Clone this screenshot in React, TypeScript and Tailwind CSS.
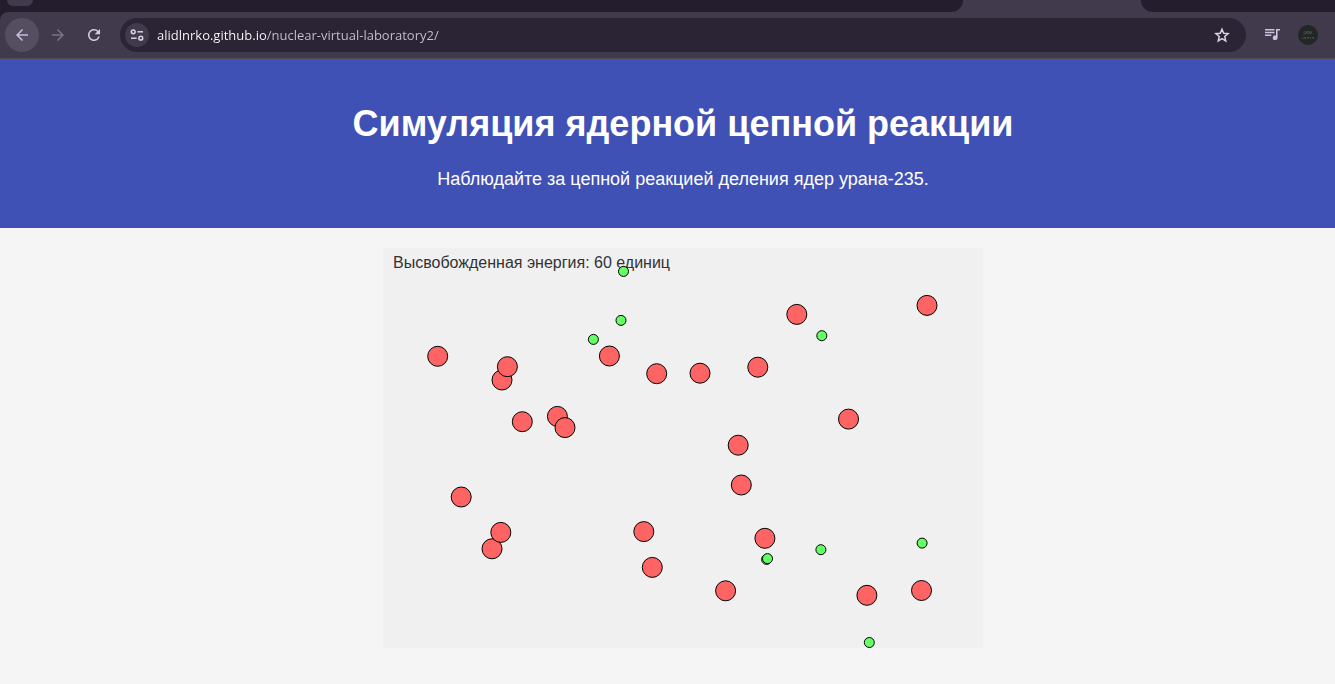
import React from "react";
import { MdArrowBack, MdArrowForward, MdRefresh } from "react-icons/md";

type Particle = { x: number; y: number };

const nuclei: Particle[] = [
  { x: 54.7, y: 108.3 },
  { x: 119, y: 132 },
  { x: 124.4, y: 118.7 },
  { x: 139.3, y: 173.7 },
  { x: 174.4, y: 168.4 },
  { x: 182, y: 179.6 },
  { x: 226.4, y: 108 },
  { x: 273.7, y: 125.7 },
  { x: 317, y: 125.2 },
  { x: 374.8, y: 119.2 },
  { x: 413.8, y: 66.4 },
  { x: 544, y: 57.4 },
  { x: 465.5, y: 171.1 },
  { x: 355.2, y: 197.2 },
  { x: 358.3, y: 237 },
  { x: 78.2, y: 249 },
  { x: 109, y: 300.8 },
  { x: 117.8, y: 284.4 },
  { x: 260.8, y: 283.6 },
  { x: 269.3, y: 319.4 },
  { x: 381.9, y: 290.3 },
  { x: 342.6, y: 342.8 },
  { x: 483.9, y: 347.3 },
  { x: 538.5, y: 342.5 },
];

const neutrons: Particle[] = [
  { x: 240.5, y: 23.4 },
  { x: 238, y: 72.4 },
  { x: 210.4, y: 91.4 },
  { x: 438.8, y: 87.7 },
  { x: 383.6, y: 311.4 },
  { x: 384.5, y: 310.6 },
  { x: 437.9, y: 301.7 },
  { x: 539.1, y: 295.1 },
  { x: 486.3, y: 394.5 },
];

function TabStrip() {
  return (
    <div className="flex h-3 bg-[#41394c]">
      <div className="min-w-0 flex-1 rounded-br-xl bg-[#231d2e] pl-[7px]">
        <div className="h-1.5 w-[26px] rounded-b-md bg-[#41394c]" />
      </div>
      <div className="w-[178px]" />
      <div className="w-[194px] rounded-bl-xl bg-[#231d2e]" />
    </div>
  );
}

function SiteSettingsIcon() {
  return (
    <svg viewBox="0 0 16 16" className="size-4" fill="none" stroke="#d9d3e2" strokeWidth="1.5" aria-hidden="true">
      <circle cx="4.2" cy="4.8" r="1.9" />
      <path d="M8.4 4.8h5.6" />
      <circle cx="11.8" cy="11.2" r="1.9" />
      <path d="M2 11.2h5.6" />
    </svg>
  );
}

function StarIcon() {
  return (
    <svg viewBox="0 0 20 20" className="size-5" fill="none" stroke="currentColor" strokeWidth="1.5" aria-hidden="true">
      <path d="M10 4.2l1.700 4.050 4.400.380-3.350 2.900 1 4.300L10 13.550l-3.750 2.280 1-4.300L3.900 8.630l4.400-.380z" />
    </svg>
  );
}

function MediaQueueIcon() {
  return (
    <svg viewBox="0 0 20 20" className="size-5" fill="currentColor" aria-hidden="true">
      <path d="M3 4h9.500v1.500H3zM3 6.800h9.500v1.500H3zM3 9.600h6.300v1.500H3z" />
      <path d="M14 4h4v1.600h-2.400v7.100a2.400 2.400 0 1 1-1.600-2.260z" />
    </svg>
  );
}

function AvatarIcon() {
  return (
    <svg viewBox="0 0 20 20" className="size-5" aria-hidden="true">
      <circle cx="10" cy="10" r="10" fill="#222624" />
      <g fill="none" stroke="#4c534f" strokeWidth="0.9">
        <path d="M5.5 7.5q1.5-2 2 0t-2 1.500M8.500 6.500v2h2v-2zM12 9.500V6.500q2-.5 1.500 1.500H12" />
        <path d="M4 12.500l1 1.500M6 14v-1.500h1.500V14M9 12.500h2M10 12.500V14M12.500 14v-1.500M14 12.500h1.500V14" />
      </g>
    </svg>
  );
}

function Toolbar() {
  return (
    <div className="bg-[#231d2e]">
      <div className="flex h-[47px] items-center rounded-tl-lg border-b border-[#4d4a55] bg-[#41394c] pl-[5px] pr-[17px]">
        <button type="button" aria-label="Назад" className="flex size-[34px] items-center justify-center rounded-full bg-[#554d60] text-[#c9bddb]">
          <MdArrowBack className="size-[18px]" />
        </button>
        <button type="button" aria-label="Вперёд" disabled className="ml-0.5 flex size-[34px] items-center justify-center rounded-full text-[#7a7285]">
          <MdArrowForward className="size-[18px]" />
        </button>
        <button type="button" aria-label="Обновить" className="ml-0.5 flex size-[34px] items-center justify-center rounded-full text-[#d6cce3]">
          <MdRefresh className="size-[18px]" />
        </button>
        <div className="ml-[9px] flex h-[34px] min-w-0 flex-1 items-center rounded-full bg-[#2b2435] pl-[5px] pr-3.5">
          <button type="button" aria-label="Сведения о сайте" className="flex size-6 shrink-0 items-center justify-center rounded-full bg-[#41394c]">
            <SiteSettingsIcon />
          </button>
          <input
            type="text"
            aria-label="Адресная строка"
            defaultValue="alidlnrko.github.io/nuclear-virtual-laboratory2/"
            className="ml-2 h-6 min-w-0 flex-1 bg-[linear-gradient(90deg,#ffffff_110px,#c9c3d0_110px)] bg-clip-text font-['Open_Sans','Noto_Sans',sans-serif] text-[13px] text-transparent caret-white outline-none"
          />
          <button type="button" aria-label="Добавить в закладки" className="flex size-5 shrink-0 items-center justify-center text-[#d9d3e2]">
            <StarIcon />
          </button>
        </div>
        <button type="button" aria-label="Управление медиа" className="ml-4 flex size-5 items-center justify-center text-[#cfc2e0]">
          <MediaQueueIcon />
        </button>
        <button type="button" aria-label="Профиль" className="ml-4 flex size-5 items-center justify-center">
          <AvatarIcon />
        </button>
      </div>
    </div>
  );
}

function Simulation() {
  return (
    <section className="relative h-[400px] w-[600px] bg-[#f0f0f0] px-2.5 pt-[5px]">
      <p className="text-base leading-5 text-[#333333]">Высвобожденная энергия: 60 единиц</p>
      <svg viewBox="0 0 600 400" className="absolute inset-0 size-full" stroke="#000000" strokeWidth="1" role="img" aria-label="Ядра и нейтроны">
        {nuclei.map((p, i) => (
          <circle key={i} cx={p.x} cy={p.y} r="10" fill="#ff6464" />
        ))}
        {neutrons.map((p, i) => (
          <circle key={i} cx={p.x} cy={p.y} r="5" fill="#64ff64" />
        ))}
      </svg>
    </section>
  );
}

export default function App() {
  return (
    <div className="flex min-h-screen flex-col bg-[#f5f5f5] font-['Liberation_Sans',Arial,sans-serif]">
      <div>
        <TabStrip />
        <Toolbar />
      </div>
      <header className="bg-[#3f51b5] pt-11 pb-[37px] pl-[31px] text-center text-white">
        <h1 className="text-4xl leading-[42px] font-bold">Симуляция ядерной цепной реакции</h1>
        <p className="mt-[22px] text-lg leading-6">Наблюдайте за цепной реакцией деления ядер урана-235.</p>
      </header>
      <main className="flex flex-1 justify-center py-5 pl-[31px]">
        <Simulation />
      </main>
    </div>
  );
}
